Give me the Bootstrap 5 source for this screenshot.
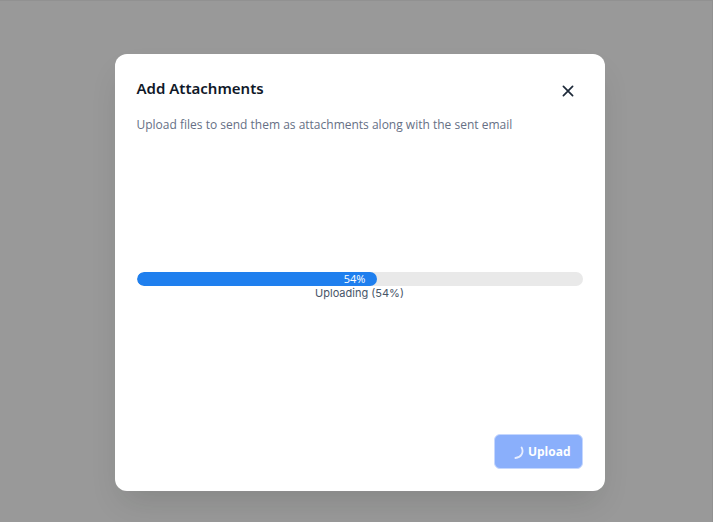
<!DOCTYPE html>
<html lang="en">
<head>
<meta charset="utf-8">
<meta name="viewport" content="width=device-width, initial-scale=1">
<title>Add Attachments</title>
<link href="https://cdn.jsdelivr.net/npm/bootstrap@5.3.0/dist/css/bootstrap.min.css" rel="stylesheet">
<style>
  body { background: #999; font-family: "Open Sans", "Noto Sans", sans-serif; }
  .stage { padding: 53px 16px 31px 23px; border-top: 1px solid #919191; border-right: 1px solid #919191; }
  .upload-dialog { max-width: 490px; border-radius: 12px; padding: 22px; box-shadow: 0 16px 32px -8px rgba(20, 24, 20, .15); }
  .dialog-title { font-family: "Noto Sans", sans-serif; font-size: 15px; line-height: 24px; font-weight: 600; color: #101828; }
  .dialog-text { font-size: 12px; line-height: 22px; color: #667085; }
  .close-button { width: 30px; height: 30px; color: #1d2939; }
  .progress-area { min-height: 298px; padding-top: 136px; }
  .upload-track { height: 14px; border-radius: 7px; background: #e9e9e9; }
  .upload-fill { border-radius: 7px; padding-right: 12px; background: #1f7fee; font-size: 11px; line-height: 14px; }
  .upload-status { font: 11px/15px Inter, sans-serif; color: #475467; }
  .upload-button, .upload-button:disabled { height: 35px; padding: 0 11px 0 16px; border: 1px solid #c5d7fe; border-radius: 6px; background: #8aaffb; color: #fff; opacity: 1; font-size: 12px; font-weight: 700; }
</style>
<script src="https://cdn.jsdelivr.net/npm/bootstrap@5.3.0/dist/js/bootstrap.bundle.min.js"></script>
</head>
<body>
<main class="stage min-vh-100">
  <section class="upload-dialog bg-white mx-auto d-flex flex-column" role="dialog" aria-labelledby="dialog-title" aria-describedby="dialog-text">
    <header>
      <div class="d-flex justify-content-between align-items-start">
        <h1 class="dialog-title m-0" id="dialog-title">Add Attachments</h1>
        <button type="button" class="close-button btn p-0 border-0 d-flex align-items-center justify-content-center" aria-label="Close">
          <svg width="12" height="12" viewBox="0 0 12 12" fill="none" stroke="currentColor" stroke-width="1.7" stroke-linecap="round" aria-hidden="true"><path d="M1.4 1.4 10.6 10.6M10.6 1.4 1.4 10.6"/></svg>
        </button>
      </div>
      <p class="dialog-text mt-2 mb-0" id="dialog-text">Upload files to send them as attachments along with the sent email</p>
    </header>
    <div class="progress-area">
      <div class="upload-track progress" role="progressbar" aria-label="Upload progress" aria-valuenow="54" aria-valuemin="0" aria-valuemax="100">
        <div class="upload-fill progress-bar text-end" style="width: 54%">54%</div>
      </div>
      <div class="upload-status text-center" role="status">Uploading (54%)</div>
    </div>
    <footer class="d-flex justify-content-end">
      <button type="button" class="upload-button btn d-flex align-items-center gap-1" disabled>
        <svg width="13" height="15" viewBox="0 0 13 15" fill="none" stroke="#e6edff" stroke-width="1.8" stroke-linecap="round" aria-hidden="true"><path d="M10.6 3.5C13.2 8.5 10 13.8 4.4 14"/></svg>
        <span>Upload</span>
      </button>
    </footer>
  </section>
</main>
</body>
</html>
